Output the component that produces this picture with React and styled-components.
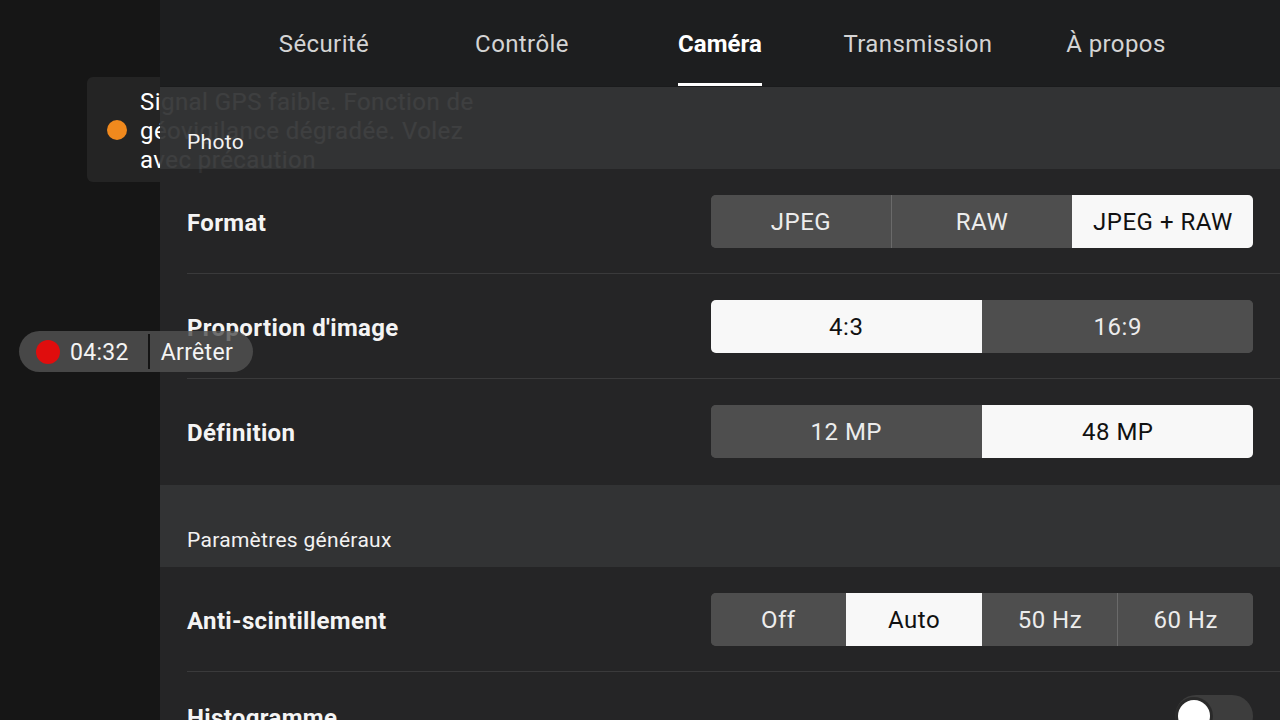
import styled, { createGlobalStyle } from 'styled-components';

const GlobalStyle = createGlobalStyle`
  html, body {
    margin: 0;
    padding: 0;
    background: #161616;
  }
  body {
    font-family: Roboto, "Noto Sans", "Liberation Sans", sans-serif;
  }
`;

const Screen = styled.div`
  position: relative;
  width: 1280px;
  height: 720px;
  overflow: hidden;
  display: flex;
  background: #161616;
`;

const CameraView = styled.div`
  width: 160px;
  flex-shrink: 0;
`;

const Panel = styled.div`
  position: relative;
  z-index: 1;
  flex: 1;
  display: flex;
  flex-direction: column;
`;

const Tabs = styled.div`
  height: 86px;
  flex-shrink: 0;
  display: flex;
  justify-content: center;
  background: rgba(30, 31, 32, 0.95);
  border-bottom: 1px solid rgba(26, 27, 28, 0.95);
`;

const Tab = styled.div`
  width: 198px;
  display: flex;
  justify-content: center;
`;

const TabLabel = styled.div`
  display: flex;
  align-items: center;
  height: 100%;
  font-size: 24px;
  letter-spacing: ${(props) => (props.active ? '0.1px' : '0.4px')};
  color: ${(props) => (props.active ? '#ffffff' : '#d4d4d4')};
  font-weight: ${(props) => (props.active ? 700 : 400)};
  padding-top: 5px;
  box-sizing: border-box;
  border-bottom: 3px solid
    ${(props) => (props.active ? '#ffffff' : 'transparent')};
`;

const SectionHeader = styled.div`
  height: 82px;
  flex-shrink: 0;
  display: flex;
  align-items: flex-end;
  padding: 0 27px 15px;
  box-sizing: border-box;
  background: rgba(52, 53, 54, 0.95);
  color: #f2f2f2;
  font-size: 21px;
  letter-spacing: 0.3px;
`;

const Rows = styled.div`
  background: rgba(38, 38, 39, 0.95);
  padding: 0 0 1px 27px;
`;

const Row = styled.div`
  height: ${(props) => (props.compact ? '88px' : '104px')};
  flex-shrink: 0;
  display: flex;
  align-items: center;
  justify-content: space-between;
  padding-right: 27px;
  border-bottom: 1px solid
    ${(props) => (props.last ? 'transparent' : '#3a3a3b')};
`;

const Label = styled.div`
  font-size: 24px;
  font-weight: 700;
  letter-spacing: 0.35px;
  color: #f4f4f4;
  padding-top: 4px;
`;

const Segmented = styled.div`
  width: 542px;
  height: 53px;
  display: flex;
  border-radius: 5px;
  overflow: hidden;
  background: #4e4e4e;
`;

const Segment = styled.div`
  flex: 1;
  display: flex;
  align-items: center;
  justify-content: center;
  font-size: 24px;
  letter-spacing: 0.5px;
  padding-top: 2px;
  color: ${(props) => (props.selected ? '#111111' : '#ececec')};
  background: ${(props) => (props.selected ? '#f8f8f8' : '#4e4e4e')};
  border-left: 1px solid
    ${(props) => (props.divider ? '#6a6a6a' : 'transparent')};
  &:first-child {
    border-left: none;
  }
`;

const Switch = styled.div`
  position: relative;
  width: 78px;
  height: 42px;
  border-radius: 21px;
  background: #3d3d3d;
`;

const Knob = styled.div`
  position: absolute;
  left: 3px;
  top: 5px;
  width: 32px;
  height: 32px;
  border-radius: 50%;
  background: #ffffff;
  box-shadow: 0 0 0 3px rgba(0, 0, 0, 0.3);
`;

const Toast = styled.div`
  position: absolute;
  z-index: 0;
  left: 87px;
  top: 77px;
  width: 446px;
  height: 105px;
  box-sizing: border-box;
  padding: 0 20px;
  display: flex;
  align-items: center;
  gap: 13px;
  border-radius: 6px;
  background: #242424;
`;

const Dot = styled.div`
  width: ${(props) => props.size}px;
  height: ${(props) => props.size}px;
  border-radius: 50%;
  flex-shrink: 0;
  background: ${(props) => props.color};
`;

const ToastText = styled.div`
  font-size: 24px;
  line-height: 29px;
  letter-spacing: 0.45px;
  color: #ffffff;
  width: 350px;
  padding-top: 3px;
`;

const RecPill = styled.div`
  position: absolute;
  z-index: 2;
  left: 19px;
  top: 331px;
  width: 234px;
  height: 41px;
  box-sizing: border-box;
  padding-left: 17px;
  display: flex;
  align-items: center;
  border-radius: 21px;
  background: rgba(82, 82, 82, 0.82);
  color: #f4f4f4;
  font-size: 23px;
  letter-spacing: 0.3px;
`;

const RecTime = styled.span`
  margin-left: 10px;
  padding-top: 1px;
`;

const RecDivider = styled.span`
  width: 2px;
  height: 35px;
  margin: 0 11px 0 19px;
  background: #141414;
`;

const RecAction = styled.span`
  padding-top: 1px;
`;

const tabs = ['Sécurité', 'Contrôle', 'Caméra', 'Transmission', 'À propos'];

const photoRows = [
  { label: 'Format', options: ['JPEG', 'RAW', 'JPEG + RAW'], selected: 2 },
  { label: "Proportion d'image", options: ['4:3', '16:9'], selected: 0 },
  { label: 'Définition', options: ['12 MP', '48 MP'], selected: 1 },
];

const SegmentGroup = ({ options, selected }) => (
  <Segmented>
    {options.map((opt, i) => (
      <Segment
        key={opt}
        selected={i === selected}
        divider={i !== selected && i - 1 !== selected}
      >
        {opt}
      </Segment>
    ))}
  </Segmented>
);

const App = () => {
  return (
    <Screen>
      <GlobalStyle />
      <CameraView />
      <Toast>
        <Dot size={20} color='#f0891d' />
        <ToastText>
          Signal GPS faible. Fonction de géovigilance dégradée. Volez avec
          précaution
        </ToastText>
      </Toast>
      <Panel>
        <Tabs>
          {tabs.map((t) => (
            <Tab key={t}>
              <TabLabel active={t === 'Caméra'}>{t}</TabLabel>
            </Tab>
          ))}
        </Tabs>
        <SectionHeader>Photo</SectionHeader>
        <Rows>
          {photoRows.map((row, i) => (
            <Row key={row.label} last={i === photoRows.length - 1}>
              <Label>{row.label}</Label>
              <SegmentGroup options={row.options} selected={row.selected} />
            </Row>
          ))}
        </Rows>
        <SectionHeader>Paramètres généraux</SectionHeader>
        <Rows>
          <Row>
            <Label>Anti-scintillement</Label>
            <SegmentGroup options={['Off', 'Auto', '50 Hz', '60 Hz']} selected={1} />
          </Row>
          <Row last compact>
            <Label>Histogramme</Label>
            <Switch>
              <Knob />
            </Switch>
          </Row>
        </Rows>
      </Panel>
      <RecPill>
        <Dot size={24} color='#e00d0d' />
        <RecTime>04:32</RecTime>
        <RecDivider />
        <RecAction>Arrêter</RecAction>
      </RecPill>
    </Screen>
  );
};

export default App;
